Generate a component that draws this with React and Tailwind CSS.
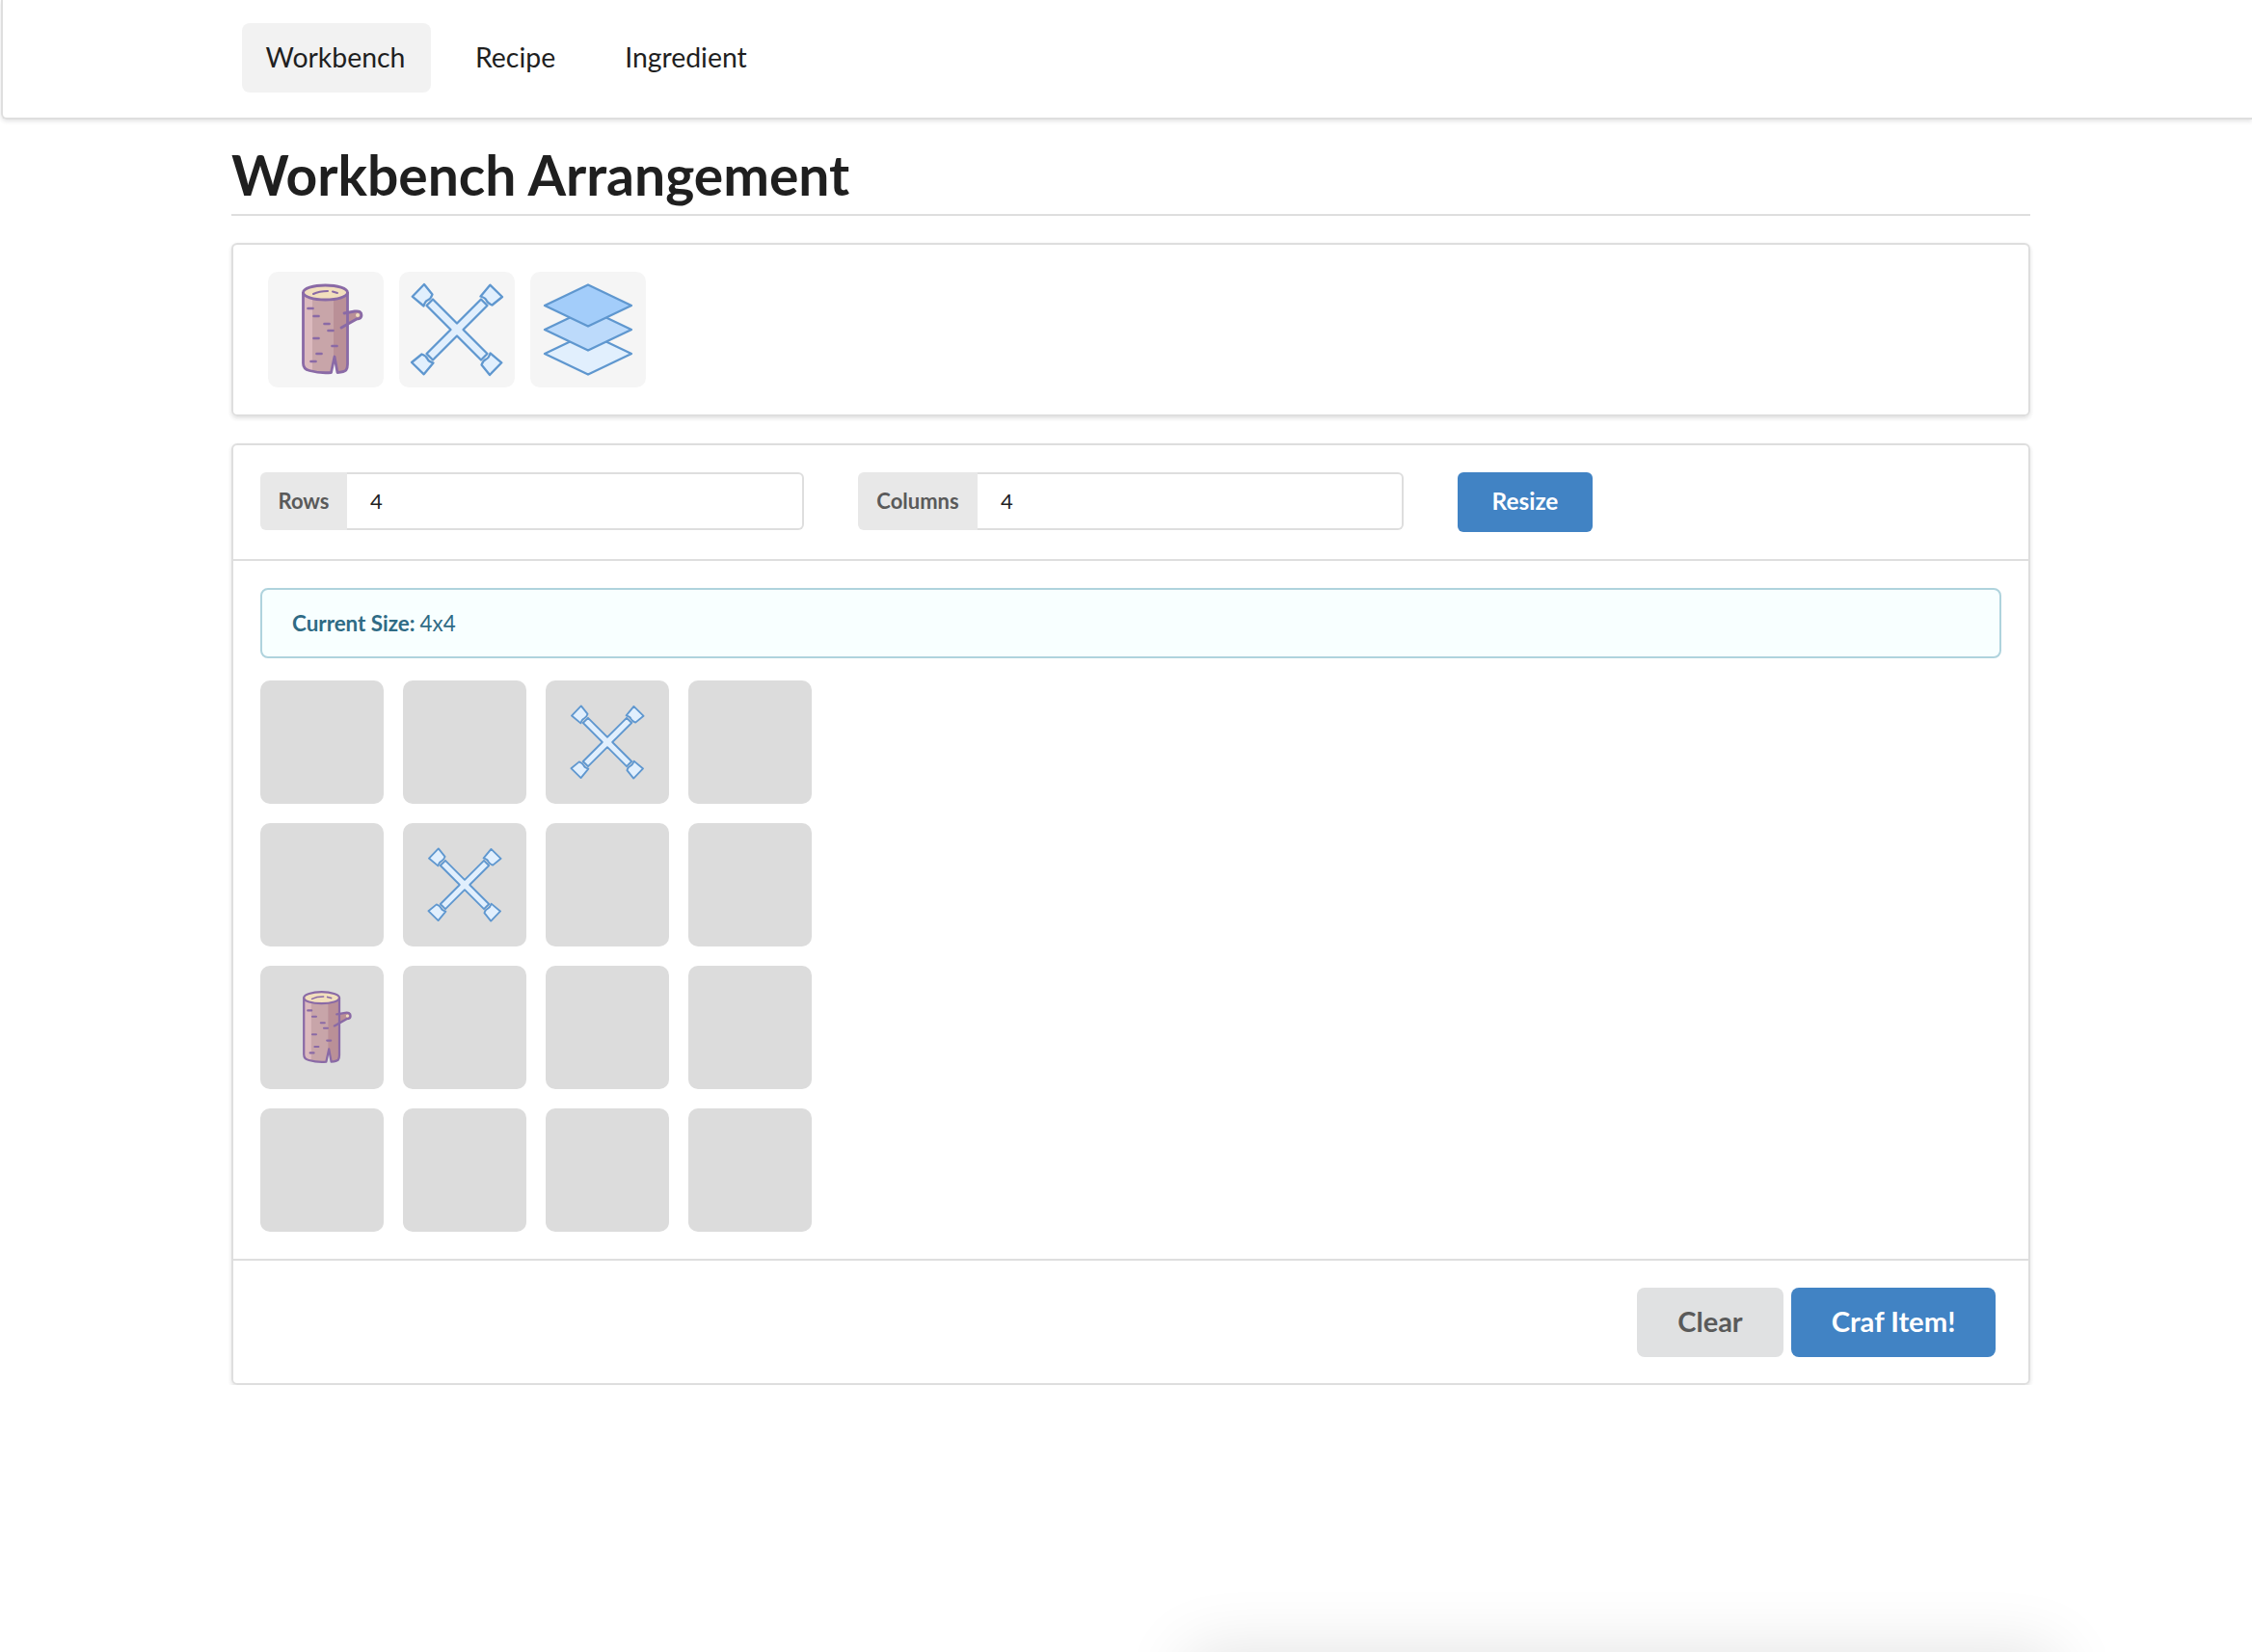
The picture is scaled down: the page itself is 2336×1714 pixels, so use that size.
import React from "react";

const STROKE = "#5f97cf";
const PURPLE = "#8a6aa6";

function LogIcon({ className }) {
  const dashes = [[44,38],[50,46],[61,54],[65,61],[50,69],[69,77],[53,85],[47,93]];
  const outline = "M36.5 21 V95 Q36.5 101 43 102.5 Q54 105.5 65.5 104.5 L69 88 L72 104.5 Q79 104 81 102 Q82.5 100 82.5 96 V21";
  return (
    <svg viewBox="0 0 120 120" className={className}>
      <path d={`${outline} Z`} fill="#c8a5a9" />
      <path d="M36.5 21 V95 Q36.5 101 46 103 V21 Z" fill="#dcbabe" />
      <path d="M68 24 V88 L69 88 L72 104.5 Q79 104 81 102 Q82.5 100 82.5 96 V21 Z" fill="#ba9097" />
      <path d="M77 44 L90 41 Q96 40 97 45 Q97 49 92 49 L76 58 Z" fill="#ba9097" />
      <circle cx="93" cy="45" r="2" fill="#f1dfc0" />
      <path d="M79 43 L90 41 Q97 40 97 45 Q97 49 92 49 L76 58" fill="none" stroke={PURPLE} strokeWidth="2.8" strokeLinecap="round" />
      <path d={outline} fill="none" stroke={PURPLE} strokeWidth="2.8" strokeLinejoin="round" />
      <ellipse cx="59.5" cy="21.5" rx="23" ry="7.5" fill="#f2dfbd" stroke={PURPLE} strokeWidth="2.8" />
      <path d="M47 23 Q53 20 62 20 M67 20.5 L72 22" fill="none" stroke={PURPLE} strokeWidth="2" strokeLinecap="round" />
      {dashes.map(([x, y]) => (
        <path key={`${x}-${y}`} d={`M${x - 2.5} ${y} H${x + 2.5}`} stroke={PURPLE} strokeWidth="2.6" strokeLinecap="round" />
      ))}
    </svg>
  );
}

function WrenchIcon({ className }) {
  const arm = (
    <path d="M26 13 L13.7 25.7 L25.5 35.5 Q27 30.5 29.5 29.5 Q33 28 34.5 23.5 Z" fill="#e1effd" stroke={STROKE} strokeWidth="2.3" strokeLinejoin="round" />
  );
  return (
    <svg viewBox="0 0 120 120" className={className}>
      <path
        d="M60 53.5 L35 28.5 L28.5 35 L53.5 60 L28.5 85 L35 91.5 L60 66.5 L85 91.5 L91.5 85 L66.5 60 L91.5 35 L85 28.5 Z"
        fill="#e1effd"
        stroke={STROKE}
        strokeWidth="2.3"
        strokeLinejoin="round"
      />
      {[0, 90, 180, 270].map((r) => (
        <g key={r} transform={`rotate(${r} 60 60)`}>{arm}</g>
      ))}
    </svg>
  );
}

function LayersIcon({ className }) {
  const diamond = (cy, fill) => (
    <path d={`M60 ${cy - 21.5} L105 ${cy} L60 ${cy + 21.5} L15 ${cy} Z`} fill={fill} stroke={STROKE} strokeWidth="2.3" strokeLinejoin="round" />
  );
  return (
    <svg viewBox="0 0 120 120" className={className}>
      {diamond(85, "#e1effd")}
      {diamond(60, "#bcdafb")}
      {diamond(35, "#a3cdfa")}
    </svg>
  );
}

function Field({ label, widthClass, labelClass }) {
  return (
    <div className={`flex h-[60px] ${widthClass}`}>
      <div className={`flex items-center justify-center rounded-l-[6px] bg-[#e8e8e8] pb-[2px] text-[22px] font-bold text-[#5a5a5a] ${labelClass}`}>
        {label}
      </div>
      <input
        readOnly
        defaultValue="4"
        className="min-w-0 flex-1 rounded-r-[6px] border-2 border-l-0 border-[#dedede] bg-white pb-[2px] pl-[24px] text-[22px] text-[#222222] outline-none"
      />
    </div>
  );
}

const cells = {
  2: <WrenchIcon className="size-[96px]" />,
  5: <WrenchIcon className="size-[96px]" />,
  8: <LogIcon className="size-[96px]" />,
};

export default function App() {
  return (
    <div className="overflow-x-hidden font-['Lato','Liberation_Sans',sans-serif] text-[#1f1f1f]">
      <nav className="ml-[1px] flex h-[124px] items-center gap-[20px] rounded-bl-[6px] border-b-2 border-l-2 border-[#dedede] pb-[2px] pl-[248px] shadow-[0_2px_4px_rgba(34,36,38,0.12)]">
        <a className="flex h-[72px] w-[196px] items-center justify-center rounded-[8px] bg-[#f2f2f2] pr-[2px] pb-[2px] text-[28.4px]">Workbench</a>
        <a className="flex h-[72px] items-center px-[26px] pb-[2px] text-[28.4px]">Recipe</a>
        <a className="flex h-[72px] items-center px-[26px] pb-[2px] text-[28.4px]">Ingredient</a>
      </nav>

      <main className="ml-[240px] w-[1866px]">
        <h1 className="mt-[21px] border-b-2 border-[#dedede] pb-[5px] text-[57px] leading-[72px] font-bold">Workbench Arrangement</h1>

        <section className="mt-[28px] flex h-[180px] gap-[16px] rounded-[6px] border-2 border-[#dedede] pt-[28px] pl-[36px] shadow-[0_2px_4px_rgba(34,36,38,0.14)]">
          <div className="flex size-[120px] items-center justify-center rounded-[10px] bg-[#f5f5f5]"><LogIcon className="size-[120px]" /></div>
          <div className="flex size-[120px] items-center justify-center rounded-[10px] bg-[#f5f5f5]"><WrenchIcon className="size-[120px]" /></div>
          <div className="flex size-[120px] items-center justify-center rounded-[10px] bg-[#f5f5f5]"><LayersIcon className="size-[120px]" /></div>
        </section>

        <section className="mt-[28px] rounded-[6px] border-2 border-[#dedede] shadow-[0_2px_4px_rgba(34,36,38,0.14)]">
          <div className="flex h-[120px] items-start border-b-2 border-[#dedede] pt-[28px] pl-[28px]">
            <Field label="Rows" widthClass="w-[564px]" labelClass="w-[90px]" />
            <div className="w-[56px]" />
            <Field label="Columns" widthClass="w-[566px]" labelClass="w-[124px]" />
            <div className="w-[56px]" />
            <button className="flex h-[62px] w-[140px] items-center justify-center rounded-[6px] bg-[#4183c4] pb-[2px] text-[24.4px] font-bold text-white">Resize</button>
          </div>

          <div className="border-b-2 border-[#dedede] p-[28px]">
            <div className="flex h-[73px] items-center rounded-[8px] border-2 border-[#afd3dd] bg-[#f8ffff] pl-[31px] text-[22.4px] text-[#2f6b85]">
              <b className="mr-[5px] font-bold">Current Size:</b>4x4
            </div>
            <div className="mt-[23px] grid w-fit grid-cols-[repeat(4,128px)] gap-[20px]">
              {Array.from({ length: 16 }, (_, i) => (
                <div key={i} className="flex size-[128px] items-center justify-center rounded-[10px] bg-[#dcdcdc]">
                  {cells[i]}
                </div>
              ))}
            </div>
          </div>

          <div className="flex justify-end gap-[8px] pt-[28px] pr-[34px] pb-[27px]">
            <button className="flex h-[72px] w-[152px] items-center justify-center rounded-[8px] bg-[#e0e1e2] pb-[2px] text-[29px] font-bold text-[#5a5a5a]">Clear</button>
            <button className="flex h-[72px] w-[212px] items-center justify-center rounded-[8px] bg-[#4183c4] pb-[2px] text-[29.2px] font-bold text-white">Craf Item!</button>
          </div>
        </section>
      </main>

      <div className="fixed top-[1714px] left-[1232px] h-[100px] w-[900px] shadow-[0_0_70px_rgba(0,0,0,0.12)]" />
    </div>
  );
}
